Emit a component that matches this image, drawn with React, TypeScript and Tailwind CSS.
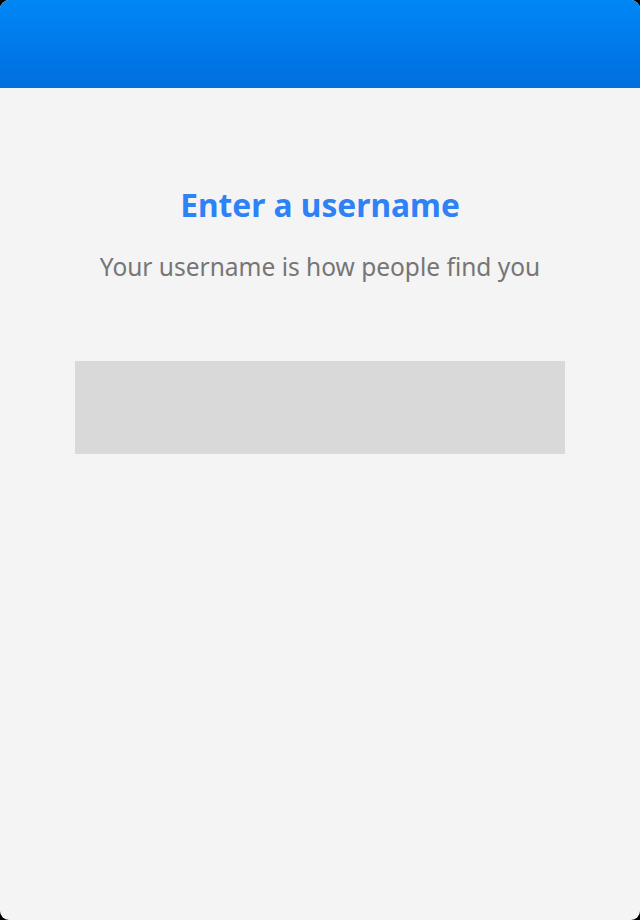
import React from 'react';

export default function App() {
  return (
    <div className="h-[920px] w-[640px] bg-black">
      <div className="flex h-full flex-col overflow-hidden rounded-[9px] bg-[#f4f4f4]">
        <header className="h-[88px] shrink-0 bg-gradient-to-b from-[#0086f6] to-[#006fdf]" />
        <main className="flex flex-col items-center pt-[97px]" style={{ fontFamily: '"Noto Sans", "Open Sans", sans-serif' }}>
          <h1 className="text-[31.7px] font-bold leading-[40px] text-[#2f81f6]">Enter a username</h1>
          <p className="mt-[26px] text-[24.5px] leading-[32px] text-[#767676]">Your username is how people find you</p>
          <div className="mt-[78px] h-[93px] w-[490px] bg-[#d9d9d9]" />
        </main>
      </div>
    </div>
  );
}
